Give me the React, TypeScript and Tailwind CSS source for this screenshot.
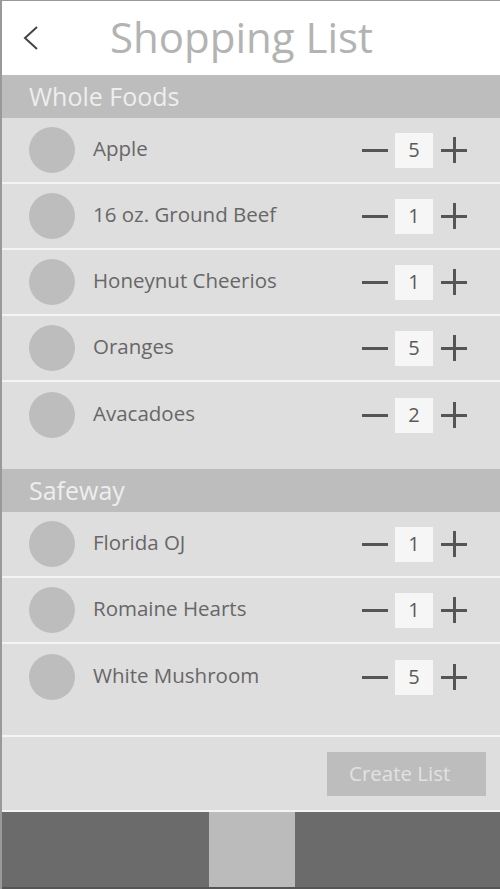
import React from "react";

interface Item {
  name: string;
  qty: number;
}

const wholeFoods: Item[] = [
  { name: "Apple", qty: 5 },
  { name: "16 oz. Ground Beef", qty: 1 },
  { name: "Honeynut Cheerios", qty: 1 },
  { name: "Oranges", qty: 5 },
  { name: "Avacadoes", qty: 2 },
];

const safeway: Item[] = [
  { name: "Florida OJ", qty: 1 },
  { name: "Romaine Hearts", qty: 1 },
  { name: "White Mushroom", qty: 5 },
];

function Row({ item, last }: { item: Item; last?: boolean }) {
  return (
    <div
      className={`flex items-center h-[66px] pl-[27px] pr-[33px] ${
        last ? "" : "border-b-2 border-[#f4f4f4]"
      }`}
    >
      <div className="w-[46px] h-[46px] rounded-full bg-[#bdbdbd] shrink-0" />
      <span className="ml-[18px] text-[20.5px] text-[#676767] flex-1 -mt-[3px]">
        {item.name}
      </span>
      <div className="flex items-center">
        {/* minus */}
        <div className="w-[26px] h-[3px] bg-[#555]" />
        <div className="ml-[7px] w-[38px] h-[35px] bg-[#f6f6f6] flex items-center justify-center text-[20px] text-[#5a5a5a]">
          {item.qty}
        </div>
        {/* plus */}
        <div className="ml-[8px] relative w-[26px] h-[26px]">
          <div className="absolute left-0 right-0 top-[11.5px] h-[3px] bg-[#555]" />
          <div className="absolute top-0 bottom-0 left-[11.5px] w-[3px] bg-[#555]" />
        </div>
      </div>
    </div>
  );
}

function Section({ title }: { title: string }) {
  return (
    <div className="h-[43px] bg-[#bdbdbd] flex items-center pl-[27px] text-[25px] text-[#eeeeee] leading-none shrink-0">
      {title}
    </div>
  );
}

export default function App() {
  return (
    <div
      className="w-[500px] h-[889px] flex flex-col bg-[#dedede] border-l-2 border-t border-[#999] overflow-hidden"
      style={{ fontFamily: '"Open Sans", "Noto Sans", sans-serif' }}
    >
      {/* Header */}
      <div className="h-[74px] bg-white flex items-center shrink-0">
        <svg width="20" height="26" viewBox="0 0 20 26" className="ml-[19px]">
          <path d="M16 2 L4 13 L16 24" fill="none" stroke="#444" strokeWidth="2" />
        </svg>
        <h1 className="ml-[69px] text-[42px] text-[#b3b3b3] leading-none -mt-[2px]">
          Shopping List
        </h1>
      </div>

      <Section title="Whole Foods" />
      <div className="pb-[21px] shrink-0">
        {wholeFoods.map((it, i) => (
          <Row key={it.name} item={it} last={i === wholeFoods.length - 1} />
        ))}
      </div>

      <Section title="Safeway" />
      <div className="border-b-2 border-[#f4f4f4] pb-[25px] shrink-0">
        {safeway.map((it, i) => (
          <Row key={it.name} item={it} last={i === safeway.length - 1} />
        ))}
      </div>

      {/* Create list */}
      <div className="h-[75px] flex items-center justify-end pr-[14px] border-b-2 border-[#f4f4f4] shrink-0">
        <button className="w-[159px] h-[44px] bg-[#bdbdbd] text-[20.5px] text-[#e2e2e2] text-left pl-[22px]">
          Create List
        </button>
      </div>

      {/* Bottom nav */}
      <div className="flex-1 flex bg-[#6b6b6b] border-b-2 border-[#555]">
        <div className="w-[207px]" />
        <div className="w-[86px] bg-[#bbbbbb]" />
        <div className="flex-1" />
      </div>
    </div>
  );
}
